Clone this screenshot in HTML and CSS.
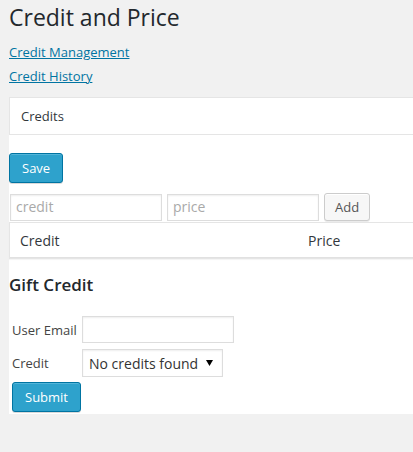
FILE: index.html
```html
<!DOCTYPE html>
<html lang="en">
<head>
<meta charset="utf-8">
<title>Credit and Price</title>
<link rel="stylesheet" href="styles.css">
</head>
<body>
<div class="wrap">
  <h1 class="title">Credit and Price</h1>
  <p class="nav-link first"><a href="#">Credit Management</a></p>
  <p class="nav-link"><a href="#">Credit History</a></p>
  <div class="panel">
    <h3 class="panel-head">Credits</h3>
    <div class="panel-body">
      <button class="btn btn-primary save" type="button">Save</button>
      <div class="add-row">
        <input class="field" type="text" placeholder="credit">
        <input class="field" type="text" placeholder="price">
        <button class="btn add" type="button">Add</button>
      </div>
      <table class="list">
        <thead>
          <tr><th class="col-credit">Credit</th><th class="col-price">Price</th></tr>
        </thead>
      </table>
      <h3 class="gift-title">Gift Credit</h3>
      <div class="gift-form">
        <label class="gift-label">User Email</label>
        <input class="field email" type="text">
        <label class="gift-label">Credit</label>
        <select class="picker"><option>No credits found</option></select>
      </div>
      <button class="btn btn-primary submit" type="button">Submit</button>
    </div>
  </div>
</div>
</body>
</html>
```

FILE: styles.css
```css
html, body {
  margin: 0;
  padding: 0;
  overflow: hidden;
}
body {
  background: #f1f1f1;
  font-family: "Open Sans", "Liberation Sans", sans-serif;
  color: #444;
}
.wrap {
  padding-left: 9px;
}
.title {
  margin: 2px 0 0;
  font-size: 23px;
  font-weight: 400;
  line-height: 30px;
  color: #23282d;
}
.nav-link {
  margin: 0;
  font-size: 13px;
  line-height: 24px;
}
.nav-link.first {
  margin-top: 8px;
}
.nav-link a {
  color: #0074a2;
  text-decoration: underline;
}
.panel {
  margin-top: 9px;
  background: #fff;
  border-top: 1px solid #e5e5e5;
}
.panel-head {
  margin: 0;
  height: 36px;
  box-sizing: content-box;
  line-height: 36px;
  font-size: 13px;
  font-weight: 400;
  padding: 0 11px;
  color: #32373c;
  border-bottom: 1px solid #e5e5e5;
  border-left: 1px solid #e5e5e5;
}
.panel-body {
  padding: 18px 0 2px;
}
.btn {
  font-family: inherit;
  font-size: 13px;
  height: 28px;
  line-height: 26px;
  padding: 0 10px 1px;
  border: 1px solid #ccc;
  background: #f7f7f7;
  border-radius: 3px;
  color: #555;
  box-shadow: inset 0 1px 0 #fff, 0 1px 0 rgba(0, 0, 0, .08);
  box-sizing: border-box;
  margin: 0;
  cursor: pointer;
}
.btn-primary {
  display: block;
  height: 30px;
  line-height: 28px;
  padding: 0 12px 2px;
  background: #2ea2cc;
  border-color: #0074a2;
  color: #fff;
  box-shadow: inset 0 1px 0 rgba(120, 200, 230, .5), 0 1px 0 rgba(0, 0, 0, .15);
}
.add-row {
  display: flex;
  align-items: flex-start;
  gap: 5px;
  margin: 10px 0 1px 1px;
}
.field {
  width: 152px;
  height: 27px;
  box-sizing: border-box;
  border: 1px solid #ddd;
  box-shadow: inset 0 1px 2px rgba(0, 0, 0, .07);
  padding: 0 5px;
  font-family: inherit;
  font-size: 14px;
  color: #333;
  background: #fff;
  margin: 0;
  outline: none;
}
.add-row .field {
  margin-top: 1px;
  padding-bottom: 3px;
}
.field::placeholder {
  color: #a9a9a9;
}
.list {
  width: 100%;
  border-spacing: 0;
  border: 1px solid #e5e5e5;
  border-right: none;
  box-shadow: 0 1px 1px rgba(0, 0, 0, .04);
}
.list th {
  text-align: left;
  font-weight: 400;
  font-size: 14px;
  line-height: 18px;
  padding: 9px 10px 7px;
  color: #32373c;
  border-bottom: 1px solid #e1e1e1;
}
.list .col-credit {
  width: 268px;
}
.gift-title {
  margin: 15px 0 0;
  font-size: 17px;
  font-weight: 600;
  line-height: 22px;
  color: #23282d;
}
.gift-form {
  display: grid;
  grid-template-columns: 70px auto;
  justify-content: start;
  align-items: center;
  row-gap: 6px;
  margin-top: 20px;
  padding-left: 3px;
}
.gift-label {
  font-size: 13px;
  color: #444;
}
.picker {
  justify-self: start;
  width: 141px;
  height: 28px;
  box-sizing: border-box;
  border: 1px solid #ddd;
  box-shadow: inset 0 1px 2px rgba(0, 0, 0, .07);
  padding: 0 20px 0 6px;
  font-family: inherit;
  font-size: 14px;
  color: #333;
  background: #fff url("data:image/svg+xml;utf8,<svg xmlns='http://www.w3.org/2000/svg' width='7' height='6' viewBox='0 0 7 6'><path d='M0 0H7L3.5 6Z' fill='%23000'/></svg>") no-repeat right 9px center;
  -webkit-appearance: none;
  appearance: none;
  border-radius: 0;
  margin: 0;
}
.submit {
  margin: 5px 0 0 3px;
}
```
